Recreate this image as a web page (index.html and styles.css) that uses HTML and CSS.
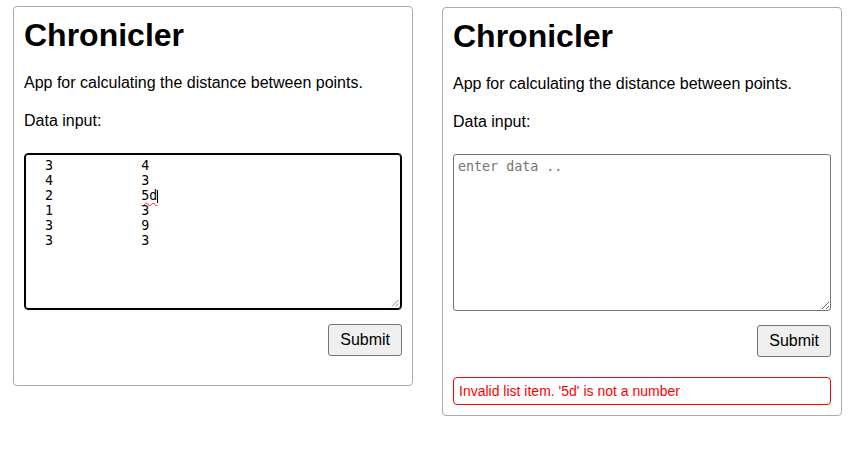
FILE: index.html
```html
<!DOCTYPE html>
<html lang="en">
<head>
<meta charset="utf-8">
<title>Chronicler</title>
<link rel="stylesheet" href="styles.css">
</head>
<body>
<main class="apps">
  <section class="panel">
    <h1 class="title">Chronicler</h1>
    <p class="text">App for calculating the distance between points.</p>
    <p class="text label">Data input:</p>
    <div class="input input-focused">
      <div class="input-text">  3           4
  4           3
  2           <span class="misspelt">5d</span><span class="caret"></span>
  1           3
  3           9
  3           3</div>
      <svg class="grip" width="8" height="8" viewBox="0 0 8 8" aria-hidden="true">
        <line x1="1" y1="7.5" x2="7.5" y2="1" stroke="#888" stroke-width="1"/>
        <line x1="4.5" y1="7.5" x2="7.5" y2="4.5" stroke="#888" stroke-width="1"/>
      </svg>
    </div>
    <div class="actions"><button class="btn" type="button">Submit</button></div>
  </section>

  <section class="panel panel-second">
    <h1 class="title">Chronicler</h1>
    <p class="text">App for calculating the distance between points.</p>
    <p class="text label">Data input:</p>
    <textarea class="input area" placeholder="enter data .."></textarea>
    <div class="actions"><button class="btn" type="button">Submit</button></div>
    <div class="error">Invalid list item. '5d' is not a number</div>
  </section>
</main>
</body>
</html>
```

FILE: styles.css
```css
* { box-sizing: border-box; }

html, body {
  margin: 0;
  background: #fff;
}

body {
  font-family: "Liberation Sans", Arial, sans-serif;
  color: #000;
}

.apps {
  display: flex;
  align-items: flex-start;
  gap: 29px;
  padding: 6px 0 0 13px;
}

.panel {
  width: 400px;
  border: 1px solid #aaa;
  border-radius: 4px;
  padding: 10px;
}

.panel-second {
  margin-top: 1px;
}

.title {
  margin: 0 0 20px;
  font-size: 32px;
  line-height: 37px;
  font-weight: bold;
}

.text {
  margin: 0 0 20px;
  font-size: 16px;
  line-height: 18px;
}

.label {
  margin-bottom: 23px;
}

.input {
  position: relative;
  display: block;
  width: 100%;
  height: 157px;
  margin: 0;
  border: 1px solid #767676;
  border-radius: 3px;
  padding: 4px;
  font-family: "DejaVu Sans Mono", monospace;
  font-size: 13.333px;
  line-height: 15px;
  color: #000;
  background: #fff;
}

.input-focused {
  border-color: #000;
  box-shadow: inset 0 0 0 1px #000;
  border-radius: 4px;
}

.input-text {
  white-space: pre;
}

.misspelt {
  text-decoration: underline wavy #e22;
  text-decoration-thickness: 1px;
  text-underline-offset: 2px;
}

.caret {
  display: inline-block;
  width: 1px;
  height: 13px;
  background: #000;
  vertical-align: -3px;
}

.grip {
  position: absolute;
  right: 2px;
  bottom: 2px;
}

.area {
  resize: both;
  outline: none;
}

.area::placeholder {
  color: #757575;
}

.actions {
  display: flex;
  justify-content: flex-end;
  margin: 14px 0 19px;
}

.btn {
  font-family: "Liberation Sans", Arial, sans-serif;
  font-size: 16px;
  line-height: 20px;
  padding: 5px 11px;
  color: #000;
  background: #efefef;
  border: 1px solid #767676;
  border-radius: 3px;
}

.error {
  margin-top: 20px;
  border: 1px solid #f00;
  border-radius: 4px;
  padding: 4px 5px;
  font-size: 14px;
  line-height: 18px;
  color: #f00;
}
```
